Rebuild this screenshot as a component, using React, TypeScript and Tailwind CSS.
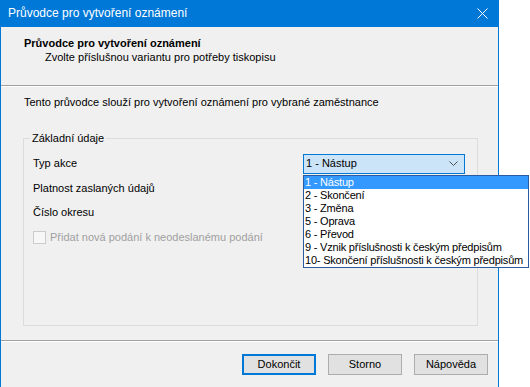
export default function App() {
  const items = [
    "1 - Nástup",
    "2 - Skončení",
    "3 - Změna",
    "5 - Oprava",
    "6 - Převod",
    "9 - Vznik příslušnosti k českým předpisům",
    "10- Skončení příslušnosti k českým předpisům",
  ];

  return (
    <div className="relative flex h-[387px] w-[530px] bg-white text-[11px] leading-[13px] text-black [font-family:'Liberation_Sans',Arial,sans-serif]">
      {/* Window */}
      <div className="flex h-full w-[499px] flex-col border-x border-[#0078d7] bg-[#f0f0f0]">
        {/* Title bar */}
        <div className="-mx-px flex h-[27px] items-center justify-between bg-[#0078d7] pl-[8px] pr-[10px] text-[12px] text-white">
          <span>Průvodce pro vytvoření oznámení</span>
          <svg width="11" height="11" viewBox="0 0 11 11" className="mr-[1px]">
            <path d="M0.5 0.5 L10.5 10.5 M10.5 0.5 L0.5 10.5" stroke="white" strokeWidth="1" fill="none" />
          </svg>
        </div>

        {/* Header */}
        <div className="flex h-[58px] flex-col pl-[23px] pt-[10px]">
          <span className="font-bold">Průvodce pro vytvoření oznámení</span>
          <span className="mt-px pl-[21px]">Zvolte příslušnou variantu pro potřeby tiskopisu</span>
        </div>
        <div className="h-[2px] border-t border-b border-t-[#a0a0a0] border-b-white" />

        {/* Body */}
        <div className="flex flex-1 flex-col pt-[9px]">
          <p className="pl-[23px]">Tento průvodce slouží pro vytvoření oznámení pro vybrané zaměstnance</p>

          <fieldset className="ml-[22px] mt-[23px] h-[194px] w-[455px] border border-[#dcdcdc] p-0">
            <legend className="ml-[6px] px-[2px]">Základní údaje</legend>
            <div className="flex flex-col pt-[6px]">
              <div className="flex h-[25px] items-center">
                <span className="w-[279px] pl-[9px]">Typ akce</span>
                <div className="flex h-[20px] w-[162px] items-center justify-between border border-[#0078d7] bg-[#cce4f7] pl-[2px] pr-[6px]">
                  <span className="font-normal">1 - Nástup</span>
                  <svg width="9" height="6" viewBox="0 0 9 6">
                    <path d="M0.5 0.5 L4.5 4.5 L8.5 0.5" stroke="#505050" strokeWidth="1" fill="none" />
                  </svg>
                </div>
              </div>
              <div className="flex h-[24px] items-center pl-[9px]">Platnost zaslaných údajů</div>
              <div className="flex h-[24px] items-center pl-[9px]">Číslo okresu</div>
              <div className="flex h-[26px] items-center pl-[9px] text-[#a0a0a0]">
                <span className="mr-[4px] h-[13px] w-[13px] border border-[#cccccc] bg-[#f7f7f7]" />
                <span>Přidat nová podání k neodeslanému podání</span>
              </div>
            </div>
          </fieldset>
        </div>

        {/* Footer */}
        <div className="h-[2px] border-t border-b border-t-[#a0a0a0] border-b-white" />
        <div className="flex h-[45px] items-start justify-end gap-[12px] pr-[10px] pt-[12px]">
          <button className="h-[21px] w-[74px] border-2 border-[#0078d7] bg-[#e1e1e1]">Dokončit</button>
          <button className="h-[21px] w-[74px] border border-[#adadad] bg-[#e1e1e1]">Storno</button>
          <button className="h-[21px] w-[74px] border border-[#adadad] bg-[#e1e1e1]">Nápověda</button>
        </div>
      </div>

      {/* Dropdown list */}
      <div className="absolute left-[303px] top-[175px] flex w-[226px] flex-col border border-[#2a5ba0] bg-white tracking-[-0.2px]">
        {items.map((item, i) => (
          <div
            key={item}
            className={
              i === 0
                ? "h-[13px] whitespace-nowrap bg-[#3399ff] pl-[1px] text-white"
                : "h-[13px] whitespace-nowrap pl-[1px]"
            }
          >
            {item}
          </div>
        ))}
      </div>
    </div>
  );
}
